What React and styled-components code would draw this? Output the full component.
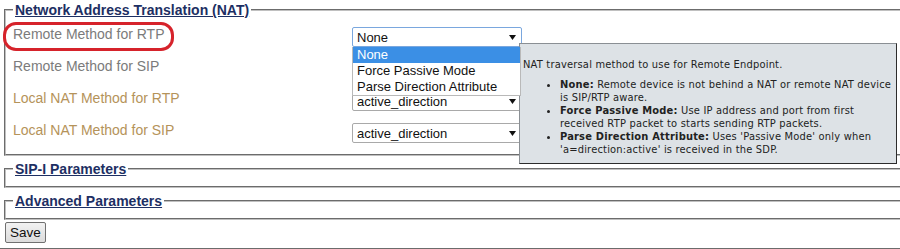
import React from "react";
import styled, { createGlobalStyle } from "styled-components";

const GlobalStyle = createGlobalStyle`
  html, body {
    margin: 0;
    padding: 0;
    background: #ffffff;
    overflow: hidden;
    font-family: "Liberation Sans", Arial, sans-serif;
  }
`;

const rows = [
  { label: "Remote Method for RTP", tone: "remote", value: "None", open: true },
  { label: "Remote Method for SIP", tone: "remote", value: "None" },
  { label: "Local NAT Method for RTP", tone: "local", value: "active_direction" },
  { label: "Local NAT Method for SIP", tone: "local", value: "active_direction" }
];

const options = ["None", "Force Passive Mode", "Parse Direction Attribute"];

const Arrow = () => (
  <svg width="7" height="5" viewBox="0 0 7 5">
    <polygon points="0,0 7,0 3.5,5" fill="#111" />
  </svg>
);

const App = () => {
  return (
    <Page>
      <GlobalStyle />
      <Fieldset>
        <Legend>Network Address Translation (NAT)</Legend>
        {rows.map((row, i) => (
          <Row key={i}>
            <Label tone={row.tone} highlighted={i === 0}>
              {row.label}
            </Label>
            <SelectWrap>
              <SelectBox focused={row.open}>
                <span>{row.value}</span>
                <ArrowSlot>
                  <Arrow />
                </ArrowSlot>
              </SelectBox>
              {row.open && (
                <>
                  <OptionList>
                    {options.map((opt, j) => (
                      <Option key={opt} selected={j === 0}>
                        {opt}
                      </Option>
                    ))}
                  </OptionList>
                  <Tooltip>
                    <TipIntro>NAT traversal method to use for Remote Endpoint.</TipIntro>
                    <TipList>
                      <li>
                        <b>None:</b> Remote device is not behind a NAT or remote NAT device is
                        SIP/RTP aware.
                      </li>
                      <li>
                        <b>Force Passive Mode:</b> Use IP address and port from first received
                        RTP packet to starts sending RTP packets.
                      </li>
                      <li>
                        <b>Parse Direction Attribute:</b> Uses 'Passive Mode' only when
                        'a=direction:active' is received in the SDP.
                      </li>
                    </TipList>
                  </Tooltip>
                </>
              )}
            </SelectWrap>
          </Row>
        ))}
      </Fieldset>
      <Fieldset empty>
        <Legend>SIP-I Parameters</Legend>
      </Fieldset>
      <Fieldset empty>
        <Legend>Advanced Parameters</Legend>
      </Fieldset>
      <SaveButton>Save</SaveButton>
      <Divider />
    </Page>
  );
};

const Page = styled.div`
  width: 900px;
  height: 249px;
  overflow: hidden;
  padding-top: 2px;
  box-sizing: border-box;
`;

const Fieldset = styled.fieldset`
  margin: ${p => (p.empty ? "5px" : "0")} -12px 0 4px;
  padding: 3px 7px ${p => (p.empty ? "6px" : "5px")};
  border: 2px groove #c0c0c0;
  min-width: 0;
`;

const Legend = styled.legend`
  padding: 0 2px;
  font-size: 14px;
  line-height: 16px;
  font-weight: bold;
  color: #1d2f63;
  text-decoration: underline;
`;

const Row = styled.div`
  display: grid;
  grid-template-columns: 339px 170px;
  height: 32px;
  align-items: start;
`;

const Label = styled.span`
  position: relative;
  justify-self: start;
  margin-top: 5px;
  font-size: 14px;
  line-height: 16px;
  color: ${p => (p.tone === "local" ? "#b5935a" : "#7b7b7b")};

  &::after {
    content: "";
    display: ${p => (p.highlighted ? "block" : "none")};
    position: absolute;
    top: -4px;
    left: -10px;
    width: 171px;
    height: 29px;
    box-sizing: border-box;
    border: 3px solid #d6232b;
    border-radius: 13px;
  }
`;

const SelectWrap = styled.div`
  position: relative;
  margin-top: 6px;
`;

const SelectBox = styled.div`
  display: flex;
  align-items: center;
  height: 20px;
  box-sizing: border-box;
  padding-left: 4px;
  border: 1px solid ${p => (p.focused ? "#7aa7de" : "#a9a9a9")};
  border-radius: 2px;
  background: #fff;
  font-size: 13px;
  color: #111;
`;

const ArrowSlot = styled.span`
  display: flex;
  margin-left: auto;
  margin-right: 5px;
`;

const OptionList = styled.div`
  position: absolute;
  top: 20px;
  left: 0;
  width: 169px;
  z-index: 3;
  background: #fff;
  border: 1px solid #b9b9b9;
  border-top: none;
  box-sizing: border-box;
`;

const Option = styled.div`
  height: 16px;
  line-height: 16px;
  padding-left: 4px;
  font-size: 13px;
  color: ${p => (p.selected ? "#fff" : "#111")};
  background: ${p => (p.selected ? "#3b8fe5" : "transparent")};
`;

const Tooltip = styled.div`
  position: absolute;
  top: 16px;
  left: 167px;
  width: 378px;
  height: 121px;
  box-sizing: border-box;
  z-index: 2;
  padding: 0 4px 3px 3px;
  background: #dde2e6;
  border: 1px solid #8a8f94;
  border-right-color: #2c2c2c;
  border-bottom-color: #2c2c2c;
  font-family: "DejaVu Sans Condensed", "DejaVu Sans", sans-serif;
  font-size: 11px;
  letter-spacing: 0.2px;
  line-height: 13px;
  color: #222;
`;

const TipIntro = styled.p`
  margin: 14px 0 7px;
`;

const TipList = styled.ul`
  margin: 0;
  padding-left: 37px;

  b {
    font-weight: bold;
  }
`;

const SaveButton = styled.button`
  display: block;
  margin: 2px 0 0 5px;
  height: 21px;
  padding: 0 4px;
  font-family: "Liberation Sans", Arial, sans-serif;
  font-size: 13.5px;
  color: #111;
  background: linear-gradient(#f2f2f2, #dcdcdc);
  border: 1px solid #707070;
  border-radius: 2px;
`;

const Divider = styled.div`
  margin-top: 5px;
  border-top: 2px groove #c0c0c0;
`;

export default App;
